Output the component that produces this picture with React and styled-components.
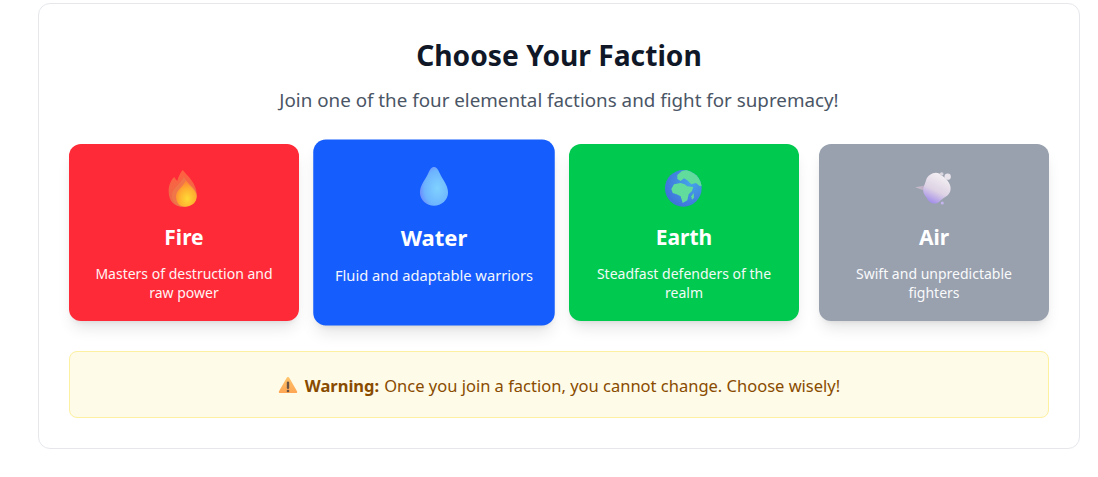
import React from "react";
import styled, { createGlobalStyle } from "styled-components";

const Global = createGlobalStyle`
  html, body { margin: 0; padding: 0; background: #fff; }
  body { font-family: "Noto Sans", "Open Sans", "Liberation Sans", sans-serif; }
`;

const Panel = styled.section`
  box-sizing: border-box;
  width: 1042px;
  height: 446px;
  margin: 3px 0 0 38px;
  padding: 30px;
  background: #fff;
  border: 1px solid #e5e7eb;
  border-radius: 12px;
  display: flex;
  flex-direction: column;
`;

const Title = styled.h1`
  margin: 0;
  text-align: center;
  color: #101828;
  font-size: 28.2px;
  line-height: 42px;
  font-weight: 700;
`;

const Subtitle = styled.p`
  margin: 11px 0 0;
  text-align: center;
  color: #4a5565;
  font-size: 18.8px;
  line-height: 27px;
`;

const Grid = styled.div`
  margin-top: 30px;
  display: grid;
  grid-template-columns: repeat(4, 1fr);
  gap: 20px;
`;

const Card = styled.article`
  box-sizing: border-box;
  height: 177px;
  padding: 20px;
  border-radius: 12px;
  background: ${(p) => p.$bg};
  color: #fff;
  text-align: center;
  box-shadow: 0 10px 15px -3px rgba(0, 0, 0, 0.1), 0 4px 6px -4px rgba(0, 0, 0, 0.1);
  transform: ${(p) => (p.$active ? "scale(1.05)" : "none")};
`;

const IconSvg = styled.svg`
  display: block;
  width: 48px;
  height: 48px;
  margin: 0 auto;
`;

const Name = styled.h2`
  margin: 9px 0 0;
  font-size: 21px;
  line-height: 33px;
  font-weight: 700;
`;

const Desc = styled.p`
  margin: 10px 0 0;
  font-size: 14px;
  line-height: 19px;
  opacity: 0.95;
`;

const Warning = styled.div`
  box-sizing: border-box;
  height: 67px;
  margin-top: 30px;
  padding-top: 1px;
  border: 1px solid #fdf0a0;
  border-radius: 8px;
  background: #fefbe8;
  color: #894b00;
  font-size: 16.5px;
  display: flex;
  align-items: center;
  justify-content: center;
`;

const WarnIcon = styled.svg`
  width: 20px;
  height: 18px;
  margin-right: 7px;
  flex: none;
`;

const Strong = styled.strong`
  font-weight: 700;
  margin-right: 5px;
`;

const FireIcon = () => (
  <IconSvg viewBox="0 0 48 48">
    <defs>
      <linearGradient id="f1" x1="0" y1="0" x2="0" y2="1">
        <stop offset="0" stopColor="#ff6040" />
        <stop offset="1" stopColor="#e86c48" />
      </linearGradient>
      <radialGradient id="f2" cx="0.55" cy="0.7" r="0.7">
        <stop offset="0" stopColor="#ffd936" />
        <stop offset="0.55" stopColor="#ffb030" />
        <stop offset="1" stopColor="#ff7d34" />
      </radialGradient>
    </defs>
    <g transform="translate(-10,-9) scale(.3333)">
      <path d="M98 45 C112 62 140 85 140 118 C140 142 122 155 98 155 C74 155 56 140 56 108 C56 92 62 76 73 66 C76 72 79 76 82 78 C84 68 90 54 98 45Z" fill="url(#f1)" />
      <path d="M102 66 C110 84 140 96 140 122 C140 143 122 155 98 155 C78 155 66 140 66 120 C66 100 88 92 102 66Z" fill="#f0764a" />
      <path d="M108 76 C116 92 140 104 140 124 C140 144 124 155 104 155 C86 155 78 140 78 124 C78 106 98 98 108 76Z" fill="url(#f2)" />
    </g>
  </IconSvg>
);

const WaterIcon = () => (
  <IconSvg viewBox="0 0 48 48">
    <defs>
      <radialGradient id="w1" cx="0.62" cy="0.55" r="0.65">
        <stop offset="0" stopColor="#80d2ff" />
        <stop offset="0.7" stopColor="#6db4ff" />
        <stop offset="1" stopColor="#6b88ff" />
      </radialGradient>
    </defs>
    <path d="M24 6 C26.5 6 28 8.5 29.5 12 C31.5 17 37.4 23 37.4 30.5 C37.4 38 31 43 24 43 C17 43 10.6 38 10.6 30.5 C10.6 23 16.5 17 18.5 12 C20 8.5 21.5 6 24 6Z" fill="url(#w1)" />
  </IconSvg>
);

const EarthIcon = () => (
  <IconSvg viewBox="0 0 48 48">
    <defs>
      <radialGradient id="e1" cx="0.7" cy="0.35" r="0.85">
        <stop offset="0" stopColor="#45a4ea" />
        <stop offset="1" stopColor="#3e6ad8" />
      </radialGradient>
      <clipPath id="e2">
        <circle cx="100" cy="100" r="55" />
      </clipPath>
    </defs>
    <g transform="translate(-10,-9) scale(.3333)">
      <circle cx="100" cy="100" r="55" fill="url(#e1)" />
      <g clipPath="url(#e2)" fill="#62dc9c">
        <path d="M82 60 L96 48 L120 42 L146 56 L162 90 L150 94 L138 84 L124 88 L112 76 L102 70 L92 78 L82 72Z" />
        <path d="M64 102 L72 88 L92 84 L104 88 L112 94 L130 96 L126 108 L116 118 L112 136 L98 144 L92 124 L80 118 L68 114Z" />
        <path d="M124 124 L131 114 L132 128 L126 134Z" />
      </g>
    </g>
  </IconSvg>
);

const AirIcon = () => (
  <IconSvg viewBox="0 0 48 48">
    <defs>
      <linearGradient id="a1" x1="0.7" y1="0.1" x2="0.3" y2="1">
        <stop offset="0" stopColor="#f2eef2" />
        <stop offset="0.55" stopColor="#ddd2e4" />
        <stop offset="1" stopColor="#a08aea" />
      </linearGradient>
      <linearGradient id="a2" x1="0" y1="0" x2="1" y2="0">
        <stop offset="0" stopColor="#cbbfca" />
        <stop offset="1" stopColor="#b5a2c4" />
      </linearGradient>
    </defs>
    <g transform="translate(-10,-9) scale(.3333)">
      <path d="M46 97 L84 90 L88 110 L66 104Z" fill="url(#a2)" />
      <path d="M78 76 C86 54 112 46 126 62 C142 72 156 90 151 108 C146 124 132 126 120 138 C106 152 88 146 80 128 C72 120 66 108 72 94 C74 88 76 84 78 76Z" fill="url(#a1)" />
      <circle cx="143" cy="65" r="9.5" fill="#e9e3ec" />
      <circle cx="125" cy="57" r="5.5" fill="#dcd6e0" />
      <circle cx="127" cy="144" r="4.5" fill="#c4b5ee" />
    </g>
  </IconSvg>
);

const factions = [
  { name: "Fire", bg: "#ff2a38", desc: "Masters of destruction and raw power", Icon: FireIcon },
  { name: "Water", bg: "#155dfc", desc: "Fluid and adaptable warriors", Icon: WaterIcon, active: true },
  { name: "Earth", bg: "#00c950", desc: "Steadfast defenders of the realm", Icon: EarthIcon },
  { name: "Air", bg: "#99a1af", desc: "Swift and unpredictable fighters", Icon: AirIcon },
];

export default function App() {
  return (
    <>
      <Global />
      <Panel>
        <Title>Choose Your Faction</Title>
        <Subtitle>Join one of the four elemental factions and fight for supremacy!</Subtitle>
        <Grid>
          {factions.map(({ name, bg, desc, Icon, active }) => (
            <Card key={name} $bg={bg} $active={active}>
              <Icon />
              <Name>{name}</Name>
              <Desc>{desc}</Desc>
            </Card>
          ))}
        </Grid>
        <Warning>
          <WarnIcon viewBox="0 0 20 18">
            <defs>
              <linearGradient id="t1" x1="0" y1="0" x2="0" y2="1">
                <stop offset="0" stopColor="#ffc46b" />
                <stop offset="1" stopColor="#ffa654" />
              </linearGradient>
            </defs>
            <path d="M10 1 C10.6 1 11 1.3 11.4 2 L19 15.2 C19.6 16.3 19 17 18 17 H2 C1 17 .4 16.3 1 15.2 L8.6 2 C9 1.3 9.4 1 10 1Z" fill="url(#t1)" />
            <rect x="8.8" y="5.5" width="2.4" height="7.5" rx="1.2" fill="#6b5344" />
            <circle cx="10" cy="15" r="1.3" fill="#6b5344" />
          </WarnIcon>
          <Strong>Warning:</Strong> Once you join a faction, you cannot change. Choose wisely!
        </Warning>
      </Panel>
    </>
  );
}
